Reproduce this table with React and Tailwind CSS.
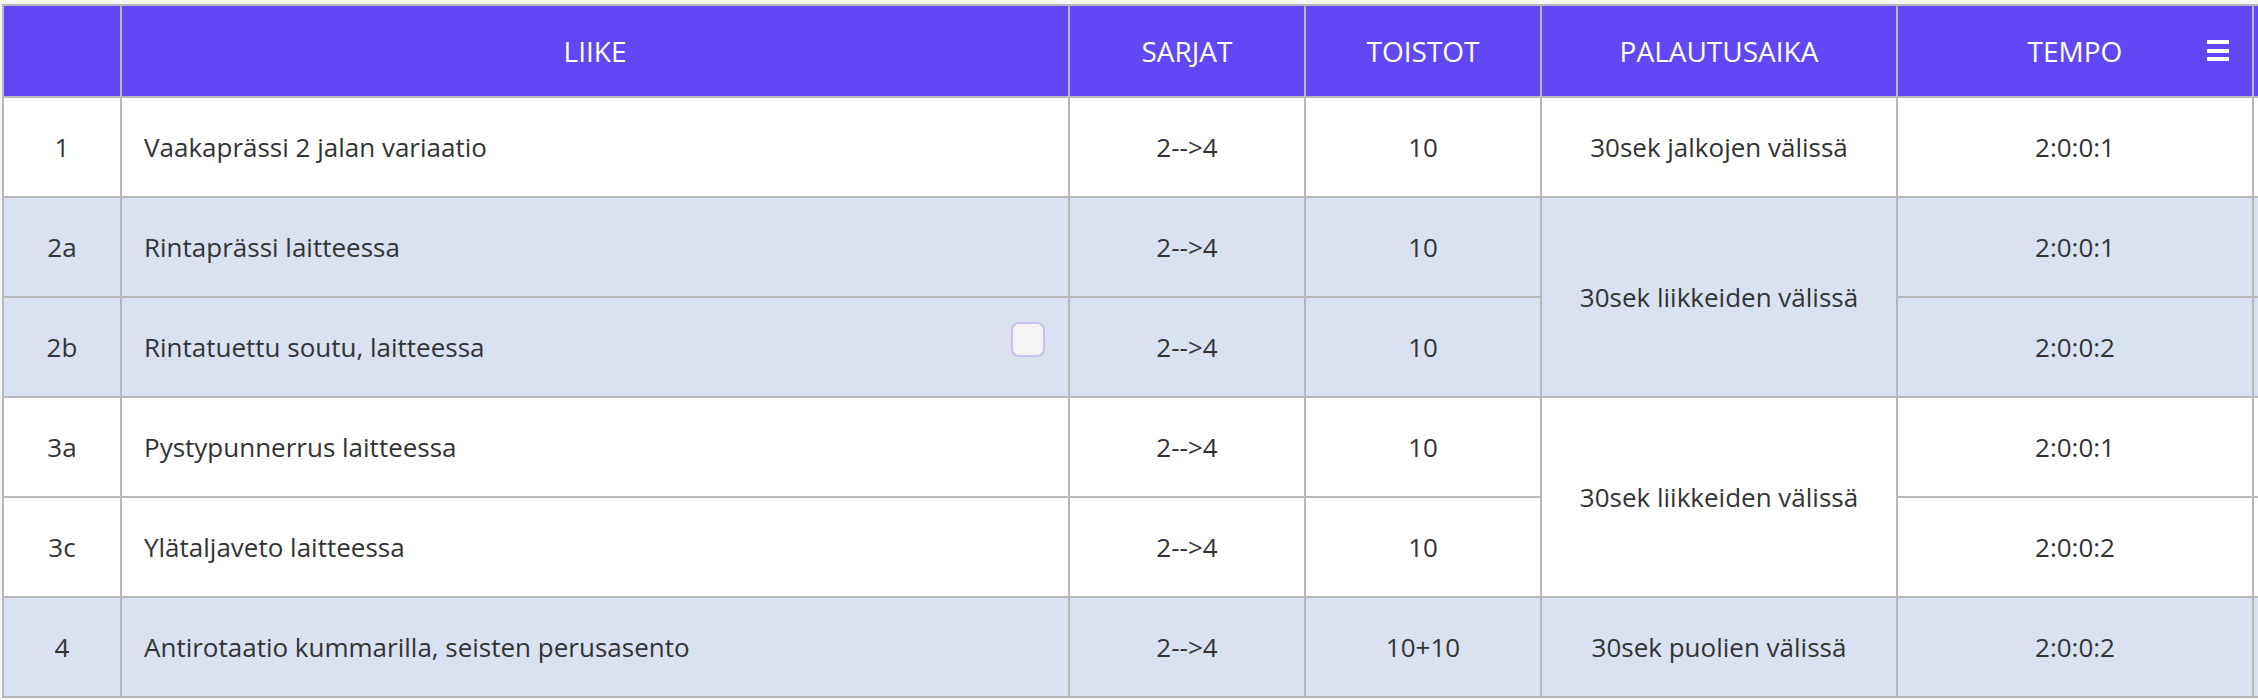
import React from 'react';

const rows = [
    { id: '1', name: 'Vaakaprässi 2 jalan variaatio', sets: '2-->4', reps: '10', rest: '30sek jalkojen välissä', tempo: '2:0:0:1', alt: false },
    { id: '2a', name: 'Rintaprässi laitteessa', sets: '2-->4', reps: '10', rest: '30sek liikkeiden välissä', restSpan: true, tempo: '2:0:0:1', alt: true },
    { id: '2b', name: 'Rintatuettu soutu, laitteessa', sets: '2-->4', reps: '10', tempo: '2:0:0:2', alt: true, check: true },
    { id: '3a', name: 'Pystypunnerrus laitteessa', sets: '2-->4', reps: '10', rest: '30sek liikkeiden välissä', restSpan: true, tempo: '2:0:0:1', alt: false },
    { id: '3c', name: 'Ylätaljaveto laitteessa', sets: '2-->4', reps: '10', tempo: '2:0:0:2', alt: false },
    { id: '4', name: 'Antirotaatio kummarilla, seisten perusasento', sets: '2-->4', reps: '10+10', rest: '30sek puolien välissä', tempo: '2:0:0:2', alt: true },
];

const headers = ['', 'LIIKE', 'SARJAT', 'TOISTOT', 'PALAUTUSAIKA', 'TEMPO', ''];

function App() {
    return (
        <div className="w-full h-screen overflow-hidden bg-[#f5f5f5] pt-[4px] pl-[2px] font-['Open_Sans',sans-serif]">
            <div className="grid w-max grid-cols-[116px_946px_234px_234px_354px_354px_100px] grid-rows-[90px_repeat(6,98px)] gap-[2px] p-[2px] bg-[#b8b8b8]">
                {headers.map((h, i) => (
                    <div key={i} className="relative flex items-center justify-center bg-[#6247f5] text-white text-[28px] font-normal">
                        {h}
                        {h === 'TEMPO' && (
                            <div className="absolute right-[23px] top-[34px] flex flex-col gap-[4.5px]">
                                <div className="w-[22px] h-[4px] bg-white" />
                                <div className="w-[22px] h-[4px] bg-white" />
                                <div className="w-[22px] h-[4px] bg-white" />
                            </div>
                        )}
                    </div>
                ))}
                {rows.map((r) => {
                    const bg = r.alt ? 'bg-[#dae1f0]' : 'bg-white';
                    const cell = `flex items-center justify-center text-[26px] text-[#333333] ${bg}`;
                    return (
                        <React.Fragment key={r.id}>
                            <div className={cell}>{r.id}</div>
                            <div className={`relative flex items-center pl-[22px] text-[26px] text-[#333333] ${bg}`}>
                                {r.name}
                                {r.check && (
                                    <div className="absolute right-[23px] top-[24px] w-[34px] h-[35px] rounded-[8px] border-2 border-[#cbc0f2] bg-[#f4f4f4]" />
                                )}
                            </div>
                            <div className={cell}>{r.sets}</div>
                            <div className={cell}>{r.reps}</div>
                            {r.rest && (
                                <div className={`${cell} ${r.restSpan ? 'row-span-2' : ''}`}>{r.rest}</div>
                            )}
                            <div className={cell}>{r.tempo}</div>
                            <div className={cell}></div>
                        </React.Fragment>
                    );
                })}
            </div>
        </div>
    );
}

export default App;
